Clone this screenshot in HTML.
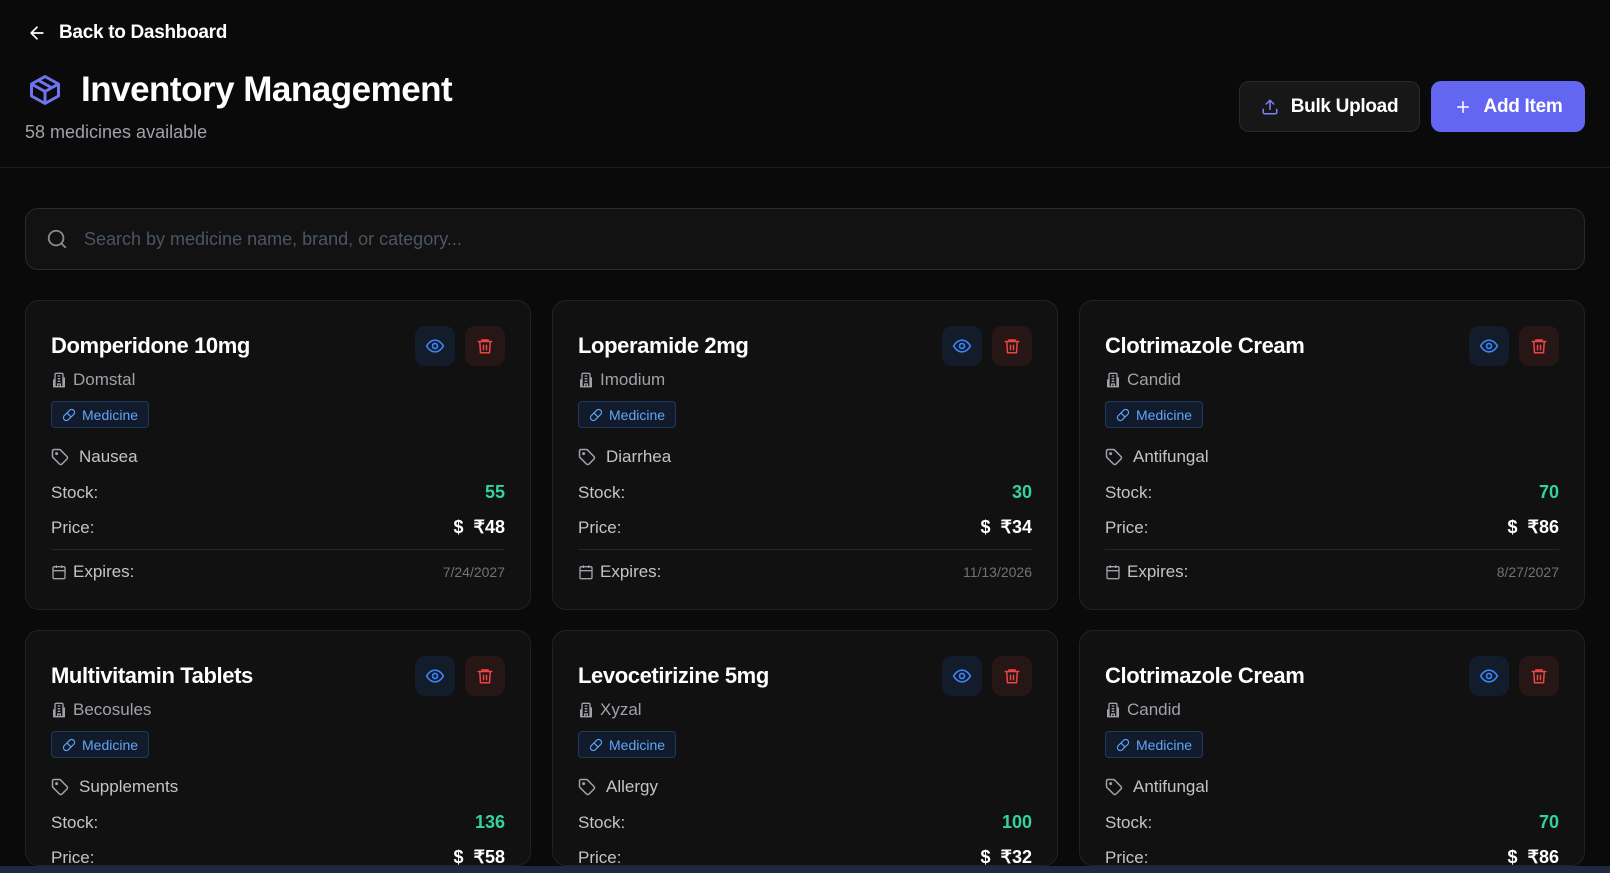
<!DOCTYPE html>
<html style="height:873px;overflow:hidden"><head><meta charset="utf-8"><style>
*{box-sizing:border-box;margin:0;padding:0}
body{width:1610px;height:873px;overflow:hidden;background:#0a0a0a;font-family:"Liberation Sans",sans-serif;color:#fff;position:relative}
.abs{position:absolute}
.back{left:27px;top:22px;display:flex;align-items:center;gap:12px;font-size:19px;font-weight:bold;letter-spacing:-0.3px}
.title{left:27px;top:70px;display:flex;align-items:center;gap:18px;font-size:35px;font-weight:bold;letter-spacing:-0.5px}
.sub{left:25px;top:122px;font-size:18px;color:#a1a1aa}
.hline{left:0;top:167px;width:1610px;height:1px;background:#1c1c1c}
.btn{top:81px;height:51px;border-radius:10px;display:flex;align-items:center;justify-content:center;gap:12px;font-size:19px;font-weight:bold;letter-spacing:-0.3px}
.search{left:25px;top:208px;width:1560px;height:62px;border:1px solid #2a2a2a;border-radius:13px;background:#121212;display:flex;align-items:center;padding-left:20px;gap:16px;font-size:18px;color:#4b5563}
.card{width:506px;height:310px;border:1px solid #222;border-radius:14px;background:#111;padding:0 25px;overflow:hidden}
.card .t{position:absolute;left:25px;top:32px;font-size:22px;font-weight:bold;letter-spacing:-0.4px}
.ib{position:absolute;top:25px;width:40px;height:40px;border-radius:10px;display:flex;align-items:center;justify-content:center}
.eye{right:75px;background:#131c2b}.del{right:25px;background:#261616}
.brand{position:absolute;left:25px;top:69px;font-size:17px;color:#a1a1aa;display:flex;align-items:center;gap:6px}
.badge{position:absolute;left:25px;top:100px;height:27px;padding:0 10px;border:1px solid #1e3a5f;background:#111b2b;border-radius:4px;color:#60a5fa;font-size:14px;display:flex;align-items:center;gap:6px}
.tag{position:absolute;left:25px;top:146px;font-size:17px;color:#c4c4c8;display:flex;align-items:center;gap:10px}
.row{position:absolute;left:25px;right:25px;display:flex;justify-content:space-between;align-items:center;font-size:17px;color:#c4c4c8}
.g{color:#34d399;font-weight:bold;font-size:18px}
.p{color:#fff;font-weight:bold;font-size:18px}
.div{position:absolute;left:25px;right:25px;top:248px;height:1px;background:#262626}
.d{color:#71717a;font-size:14px}
</style></head><body>
<div class="abs back"><svg width="20" height="20" viewBox="0 0 24 24" fill="none" stroke="#fff" stroke-width="2" stroke-linecap="round" stroke-linejoin="round"><path d="M19 12H5M12 19l-7-7 7-7"/></svg>Back to Dashboard</div>
<div class="abs title"><svg width="36" height="38" viewBox="0 0 24 24" fill="none" stroke="#6f73f0" stroke-width="2" stroke-linejoin="round"><path d="M21 8 12 3 3 8v8l9 5 9-5V8z"/><path d="M3 8l9 5 9-5M12 13v8M7.5 5.5l9 5"/></svg>Inventory Management</div>
<div class="abs sub">58 medicines available</div>
<div class="abs hline"></div>
<div class="abs btn" style="left:1239px;width:181px;background:#171717;border:1px solid #2a2a2a"><svg width="18" height="18" viewBox="0 0 24 24" fill="none" stroke="#7c83f5" stroke-width="2" stroke-linecap="round" stroke-linejoin="round"><path d="M21 15v4a2 2 0 0 1-2 2H5a2 2 0 0 1-2-2v-4M17 8l-5-5-5 5M12 3v12"/></svg>Bulk Upload</div>
<div class="abs btn" style="left:1431px;width:154px;background:#6366f1"><svg width="18" height="18" viewBox="0 0 24 24" fill="none" stroke="#fff" stroke-width="2" stroke-linecap="round"><path d="M12 5v14M5 12h14"/></svg>Add Item</div>
<div class="abs search"><svg width="22" height="22" viewBox="0 0 24 24" fill="none" stroke="#8a8a8a" stroke-width="2" stroke-linecap="round"><circle cx="11" cy="11" r="8"/><path d="m21 21-4.3-4.3"/></svg>Search by medicine name, brand, or category...</div>
<div id="cards"></div>
<div class="abs" style="left:0;top:866px;width:1610px;height:7px;background:#1e2940"></div>
<script>
const data=[["Domperidone 10mg","Domstal","Nausea","55","48","7/24/2027"],["Loperamide 2mg","Imodium","Diarrhea","30","34","11/13/2026"],["Clotrimazole Cream","Candid","Antifungal","70","86","8/27/2027"],["Multivitamin Tablets","Becosules","Supplements","136","58","7/24/2027"],["Levocetirizine 5mg","Xyzal","Allergy","100","32","11/13/2026"],["Clotrimazole Cream","Candid","Antifungal","70","86","8/27/2027"]];
let h="";
data.forEach((d,i)=>{const x=25+(i%3)*527,y=i<3?300:630;const hh=i<3?310:236;
h+=`<div class="abs card" style="left:${x}px;top:${y}px;height:${hh}px">
<div class="t">${d[0]}</div>
<div class="ib eye"><svg width="20" height="20" viewBox="0 0 24 24" fill="none" stroke="#3b82f6" stroke-width="2"><path d="M2 12s3.5-7 10-7 10 7 10 7-3.5 7-10 7S2 12 2 12z"/><circle cx="12" cy="12" r="3"/></svg></div>
<div class="ib del"><svg width="18" height="18" viewBox="0 0 24 24" fill="none" stroke="#ef4444" stroke-width="2" stroke-linecap="round"><path d="M3 6h18M8 6V4h8v2M5 6l1 15h12l1-15M10 11v6M14 11v6"/></svg></div>
<div class="brand"><svg width="16" height="16" viewBox="0 0 24 24" fill="none" stroke="#a1a1aa" stroke-width="2"><path d="M6 22V4a2 2 0 0 1 2-2h8a2 2 0 0 1 2 2v18zM6 12H4v10h2M18 9h2v13h-2M10 6h4M10 10h4M10 14h4M10 22v-4h4v4"/></svg>${d[1]}</div>
<div class="badge"><svg width="14" height="14" viewBox="0 0 24 24" fill="none" stroke="#60a5fa" stroke-width="2"><path d="M10.5 20.5a5 5 0 0 1-7-7l10-10a5 5 0 0 1 7 7z M8.5 8.5l7 7"/></svg>Medicine</div>
<div class="tag"><svg width="18" height="18" viewBox="0 0 24 24" fill="none" stroke="#a1a1aa" stroke-width="2"><path d="M12.6 2.6A2 2 0 0 0 11.2 2H4a2 2 0 0 0-2 2v7.2a2 2 0 0 0 .6 1.4l8.7 8.7a2.4 2.4 0 0 0 3.4 0l6.6-6.6a2.4 2.4 0 0 0 0-3.4z"/><circle cx="7.5" cy="7.5" r="1"/></svg>${d[2]}</div>
<div class="row" style="top:181px"><span>Stock:</span><span class="g">${d[3]}</span></div>
<div class="row" style="top:216px"><span>Price:</span><span class="p">$&nbsp; ₹${d[4]}</span></div>
<div class="div"></div>
<div class="row" style="top:246px;height:50px"><span style="display:flex;align-items:center;gap:6px"><svg width="16" height="16" viewBox="0 0 24 24" fill="none" stroke="#a1a1aa" stroke-width="2"><rect x="3" y="4" width="18" height="18" rx="2"/><path d="M16 2v4M8 2v4M3 10h18"/></svg>Expires:</span><span class="d">${d[5]}</span></div>
</div>`});
document.getElementById("cards").innerHTML=h;
</script>
</body></html>
